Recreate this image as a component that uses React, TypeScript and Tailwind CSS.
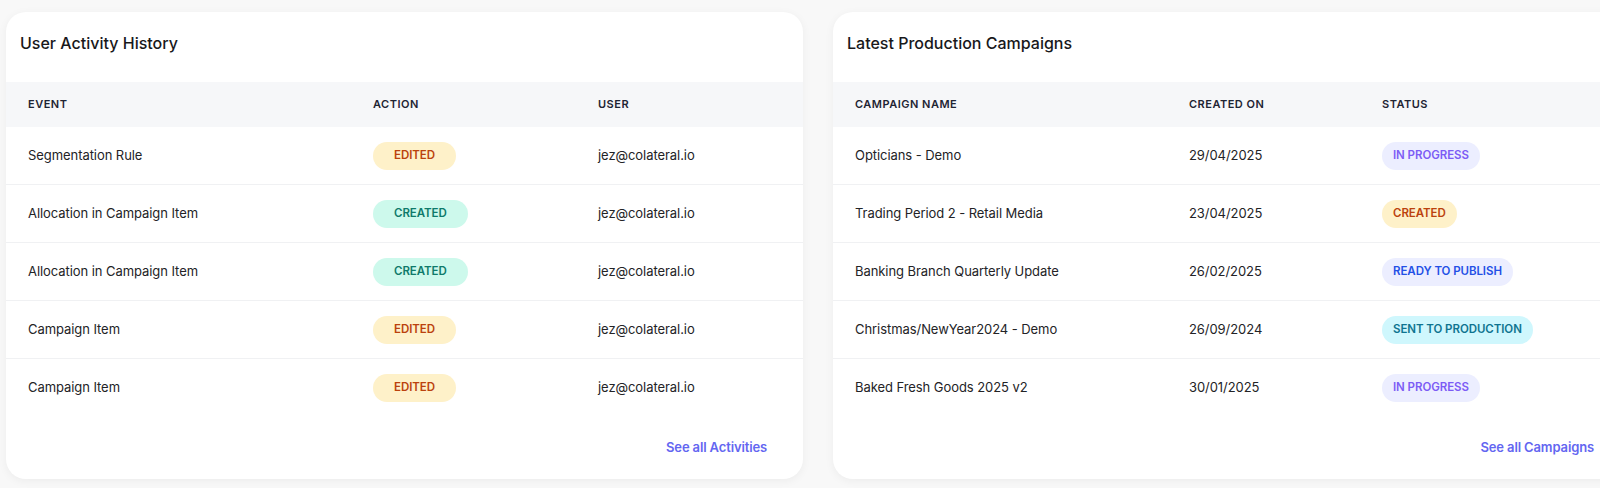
import React from "react";

type Badge = { label: string; cls: string };

const edited: Badge = { label: "EDITED", cls: "bg-[#fef1c9] text-[#bb420d]" };
const createdTeal: Badge = { label: "CREATED", cls: "bg-[#cdf9ec] text-[#0f7a6a]" };
const createdAmber: Badge = { label: "CREATED", cls: "bg-[#fef1c9] text-[#bb420d]" };
const inProgress: Badge = { label: "IN PROGRESS", cls: "bg-[#eceeff] text-[#7c5cf5]" };
const ready: Badge = { label: "READY TO PUBLISH", cls: "bg-[#eceeff] text-[#2350e6]" };
const sent: Badge = { label: "SENT TO PRODUCTION", cls: "bg-[#cff7fd] text-[#0e7490]" };

const activities: [string, Badge, string][] = [
  ["Segmentation Rule", edited, "jez@colateral.io"],
  ["Allocation in Campaign Item", createdTeal, "jez@colateral.io"],
  ["Allocation in Campaign Item", createdTeal, "jez@colateral.io"],
  ["Campaign Item", edited, "jez@colateral.io"],
  ["Campaign Item", edited, "jez@colateral.io"],
];

const campaigns: [string, string, Badge][] = [
  ["Opticians - Demo", "29/04/2025", inProgress],
  ["Trading Period 2 - Retail Media", "23/04/2025", createdAmber],
  ["Banking Branch Quarterly Update", "26/02/2025", ready],
  ["Christmas/NewYear2024 - Demo", "26/09/2024", sent],
  ["Baked Fresh Goods 2025 v2", "30/01/2025", inProgress],
];

function Pill({ b, wide }: { b: Badge; wide?: boolean }) {
  return (
    <span
      className={`inline-flex h-[28px] items-center rounded-full text-[11.5px] font-semibold ${
        wide ? "px-[21px]" : "px-[11px]"
      } ${b.cls}`}
    >
      {b.label}
    </span>
  );
}

function Card({
  title,
  headers,
  cols,
  rows,
  link,
}: {
  title: string;
  headers: string[];
  cols: string;
  rows: React.ReactNode[][];
  link: string;
}) {
  return (
    <div className="flex w-[797px] shrink-0 flex-col rounded-[20px] bg-white shadow-[0_2px_10px_rgba(0,0,0,0.05)]">
      <div className="flex h-[70px] items-start pl-[14px] pt-[20px]">
        <h2 className="text-[16px] font-medium leading-[22px] text-[#18181b]">{title}</h2>
      </div>
      <div className={`grid h-[45px] items-center bg-[#f6f7f9] ${cols}`}>
        {headers.map((h) => (
          <div key={h} className="pl-[22px] text-[11px] font-semibold tracking-[0.045em] text-[#1e2433]">
            {h}
          </div>
        ))}
      </div>
      {rows.map((r, i) => (
        <div
          key={i}
          className={`grid h-[58px] items-center ${i < rows.length - 1 ? "border-b border-[#f0f1f3]" : ""} ${cols}`}
        >
          {r.map((c, j) => (
            <div key={j} className="pl-[22px] text-[13px] tracking-[-0.005em] text-[#232326]">
              {c}
            </div>
          ))}
        </div>
      ))}
      <div className="flex h-[62px] items-center justify-end pr-[36px]">
        <a className="text-[13px] font-semibold tracking-[-0.01em] text-[#6366f1]">{link}</a>
      </div>
    </div>
  );
}

export default function App() {
  return (
    <div
      className="h-[488px] w-[1600px] overflow-hidden bg-[#f8f8f8]"
      style={{ fontFamily: "Inter, 'Noto Sans', sans-serif" }}
    >
      <div className="flex gap-[30px] pl-[6px] pt-[12px]">
        <Card
          title="User Activity History"
          headers={["EVENT", "ACTION", "USER"]}
          cols="grid-cols-[345px_225px_1fr]"
          rows={activities.map(([e, b, u]) => [e, <Pill b={b} wide />, u])}
          link="See all Activities"
        />
        <Card
          title="Latest Production Campaigns"
          headers={["CAMPAIGN NAME", "CREATED ON", "STATUS"]}
          cols="grid-cols-[334px_193px_1fr]"
          rows={campaigns.map(([n, d, b]) => [n, d, <Pill b={b} />])}
          link="See all Campaigns"
        />
      </div>
    </div>
  );
}
